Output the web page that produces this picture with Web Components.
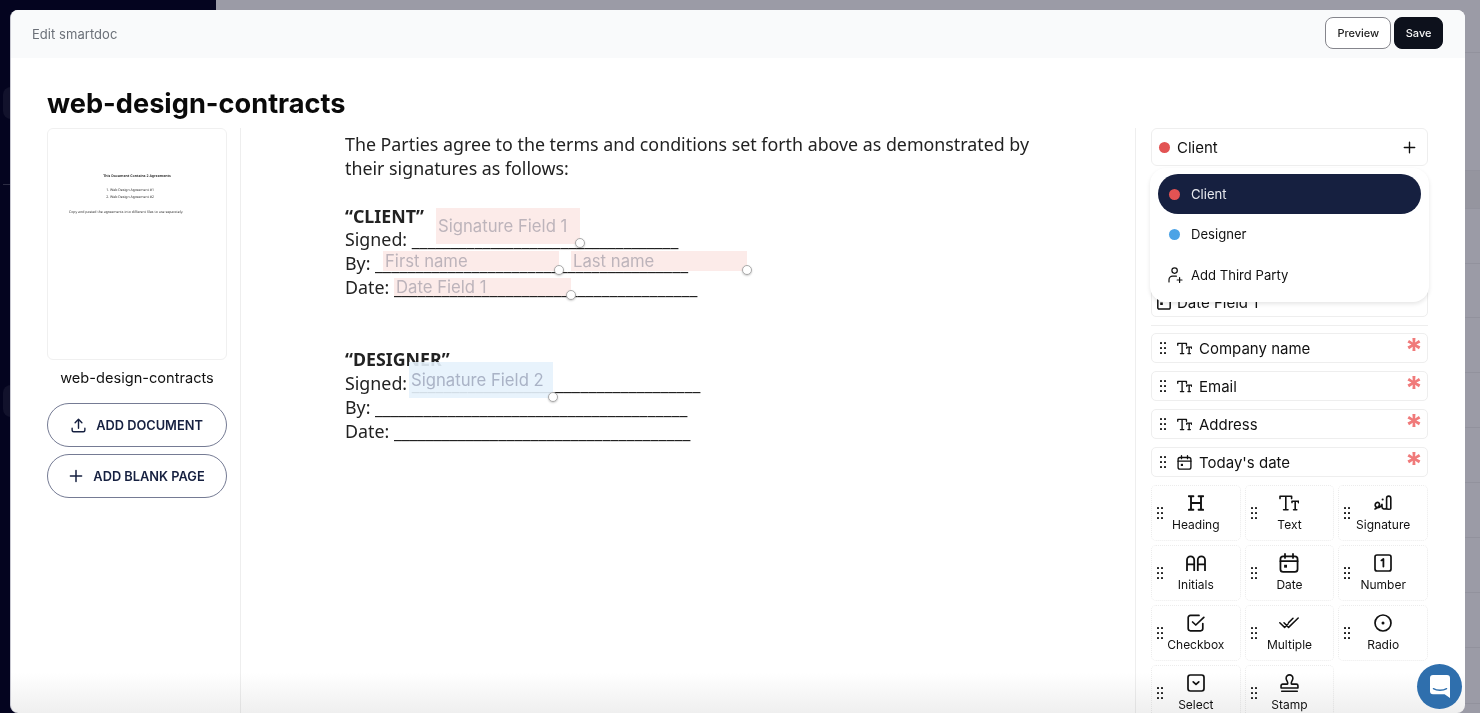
<!DOCTYPE html>
<html>
<head>
<meta charset="utf-8">
<title>Edit smartdoc</title>
<style>
    html, body { margin: 0; height: 100%; overflow: hidden; }
    body { font-family: Inter, "Liberation Sans", sans-serif; color: #111; }
</style>
</head>
<body>
<app-backdrop></app-backdrop>
<modal-shell>
    <span slot="heading">Edit smartdoc</span>
    <ui-button slot="actions">Preview</ui-button>
    <ui-button slot="actions" dark>Save</ui-button>
    <span slot="title">web-design-contracts</span>
    <doc-sidebar slot="left"></doc-sidebar>
    <doc-page slot="middle"></doc-page>
    <party-panel slot="right"></party-panel>
</modal-shell>
<chat-bubble></chat-bubble>

<script>
const ICONS = {
    heading: `<svg viewBox="0 0 16 16" stroke-width="1.9"><path d="M3 1.5V14.5M13 1.5V14.5M3 8H13M.8 1.2H5.4M10.6 1.2H15.2M.8 14.8H5.4M10.6 14.8H15.2"/></svg>`,
    text: `<svg viewBox="0 0 20 16" stroke-width="1.6"><path d="M1 3.6V1.2H12.6V3.6M6.8 1.2V14.8M4.6 14.8H9M13 7.6V6.2H19.4V7.6M16.2 6.2V14.8H14.6M16.2 14.8H17.8"/></svg>`,
    signature: `<svg viewBox="0 0 18 16" stroke-width="1.6"><path d="M1 14C4 13 6.5 10 5 8C3.5 6.5 .8 8 1.2 10.5C1.6 13 5 13.5 7 11L8 9.4V12C8 14 11 14.5 12.6 13.5"/><path d="M12.6 13.4V3.4C12.6 .4 16.8 .4 16.8 3.4V13.4C16.8 14.4 12.6 14.4 12.6 13.4Z"/><path d="M8.6 4.4H8.7" stroke-width="2"/></svg>`,
    initials: `<svg viewBox="0 0 20 16" stroke-width="1.8"><path d="M1 15.5V5A3.6 3.6 0 0 1 8.2 5V15.5M1 9.4H8.2M11.8 15.5V5A3.6 3.6 0 0 1 19 5V15.5M11.8 9.4H19"/></svg>`,
    date: `<svg viewBox="0 0 18 18" stroke-width="1.6"><rect x="1.3" y="3" width="15.4" height="14" rx="2.4"/><path d="M1.3 7.4H16.7M5.4 .8V4.4M12.6 .8V4.4"/><rect x="4.6" y="10.6" width="2.6" height="2.6" fill="#111" stroke="none"/></svg>`,
    number: `<svg viewBox="0 0 18 18" stroke-width="1.7"><rect x="1" y="1" width="16" height="16" rx="2"/><path d="M7.4 6.4L9.4 5V12.6" stroke-width="1.8"/></svg>`,
    checkbox: `<svg viewBox="0 0 18 18" stroke-width="1.7"><path d="M15.8 9.5V14.6A2.2 2.2 0 0 1 13.6 16.8H3.4A2.2 2.2 0 0 1 1.2 14.6V3.6A2.2 2.2 0 0 1 3.4 1.4H12"/><path d="M5.6 8L8.8 11L16.8 3.4"/></svg>`,
    multiple: `<svg viewBox="0 0 20 12" stroke-width="1.5"><path d="M.8 5.8L5.6 10.4L9 7M5 5.8L9.6 10.4L19.2 1M9.6 5.6L14 1.2"/></svg>`,
    radio: `<svg viewBox="0 0 18 18" stroke-width="1.7"><circle cx="9" cy="9" r="8"/><circle cx="9" cy="9" r="1.5" fill="#111" stroke="none"/></svg>`,
    select: `<svg viewBox="0 0 18 18" stroke-width="1.7"><rect x="1" y="1" width="16" height="16" rx="2.4"/><path d="M6.2 7.8L9 10.4L11.8 7.8"/></svg>`,
    stamp: `<svg viewBox="0 0 18 18" stroke-width="1.5"><path d="M1 11.2A1.6 1.6 0 0 1 2.6 9.6H6.6C7.6 9.6 7.4 8.4 7 7.4C6.4 6 5.8 5.4 5.8 4A3.2 3.2 0 0 1 12.2 4C12.2 5.4 11.6 6 11 7.4C10.6 8.4 10.4 9.6 11.4 9.6H15.4A1.6 1.6 0 0 1 17 11.2V13.2H1ZM1.6 16.4H16.4"/></svg>`,
    dateField: `<svg viewBox="0 0 14 16" stroke-width="1.5"><path d="M9 .9H2.2A1.4 1.4 0 0 0 .8 2.3V13.7A1.4 1.4 0 0 0 2.2 15.1H11.8A1.4 1.4 0 0 0 13.2 13.7V5"/><rect x="3.2" y="8.4" width="2.6" height="2.6" fill="#111" stroke="none"/></svg>`,
    addUser: `<svg viewBox="0 0 16 16" stroke-width="1.2"><circle cx="6.6" cy="3.6" r="2.7"/><path d="M1 15V12.8A3.6 3.6 0 0 1 4.6 9.2H8.4M11.6 10.6V15.4M9.2 13H14"/></svg>`,
    plus: `<svg viewBox="0 0 14 14" stroke-width="1.5"><path d="M7 1.4V12.6M1.4 7H12.6"/></svg>`,
    upload: `<svg viewBox="0 0 16 16" stroke-width="1.5"><path d="M8 11V1.6M4.4 5L8 1.4L11.6 5M1.2 11V13A1.6 1.6 0 0 0 2.8 14.6H13.2A1.6 1.6 0 0 0 14.8 13V11"/></svg>`
};

class FieldIcon extends HTMLElement {
    constructor() {
        super();
        this.attachShadow({ mode: 'open' });
    }
    connectedCallback() {
        const w = this.getAttribute('w') || 16;
        const h = this.getAttribute('h') || 16;
        const c = this.getAttribute('color') || '#111';
        const sw = this.getAttribute('sw');
        this.shadowRoot.innerHTML = `
        <style>
            :host { display: block; width: ${w}px; height: ${h}px; flex: none; }
            svg { display: block; width: 100%; height: 100%; fill: none; stroke: ${c}; stroke-linecap: round; stroke-linejoin: round; ${sw ? `stroke-width: ${sw};` : ''} }
        </style>${ICONS[this.getAttribute('name')]}`;
    }
}
customElements.define('field-icon', FieldIcon);

class DragHandle extends HTMLElement {
    constructor() {
        super();
        this.attachShadow({ mode: 'open' }).innerHTML = `
        <style>
            :host { display: grid; grid-template-columns: 2px 2px; gap: 3px 2px; flex: none; }
            i { width: 2px; height: 2px; background: #222; border-radius: 30%; }
        </style><i></i><i></i><i></i><i></i><i></i><i></i>`;
    }
}
customElements.define('drag-handle', DragHandle);

class AppBackdrop extends HTMLElement {
    constructor() {
        super();
        this.attachShadow({ mode: 'open' }).innerHTML = `
        <style>
            :host { position: absolute; inset: 0; display: flex; background: #9b9ba6; }
            .side { width: 216px; box-sizing: border-box; padding: 87px 0 0 3px; background: #04041f; display: flex; flex-direction: column; }
            .chip { width: 40px; height: 32px; border-radius: 8px; background: rgba(255,255,255,.06); }
            .rule { height: 1px; margin-top: 65px; background: rgba(255,255,255,.16); }
            .rows { flex: 1; display: flex; flex-direction: column; }
            .rows div { box-sizing: border-box; border-bottom: 1px solid #92929d; flex: none; }
            .rows .dim { background: #95959f; }
        </style>
        <div class="side">
            <div class="chip"></div>
            <div class="rule"></div>
            <div class="chip" style="margin-top:200px"></div>
        </div>
        <div class="rows">
            <div style="height:53px"></div><div style="height:118px"></div><div class="dim" style="height:38px"></div>
            <div style="height:55px"></div><div style="height:54px"></div><div style="height:55px"></div>
            <div style="height:55px"></div><div style="height:55px"></div><div style="height:55px"></div>
            <div style="height:55px"></div><div style="height:55px"></div><div style="height:56px"></div>
        </div>`;
    }
}
customElements.define('app-backdrop', AppBackdrop);

class UiButton extends HTMLElement {
    constructor() {
        super();
        this.attachShadow({ mode: 'open' }).innerHTML = `
        <style>
            :host { display: flex; align-items: center; height: 32px; box-sizing: border-box; padding: 0 11px;
                border: 1px solid #85858c; border-radius: 8px; background: #fff; color: #222;
                font-size: 11px; font-weight: 500; }
            :host([dark]) { padding: 0 10.5px; background: #0d111c; border-color: #0d111c; color: #f5f5f5; }
        </style><slot></slot>`;
    }
}
customElements.define('ui-button', UiButton);

class ModalShell extends HTMLElement {
    constructor() {
        super();
        this.attachShadow({ mode: 'open' }).innerHTML = `
        <style>
            :host { position: absolute; left: 10px; top: 10px; width: 1455px; height: 703px; box-sizing: border-box; display: flex; flex-direction: column;
                background: #fff; border-left: 1px solid #c9c9d2; border-radius: 8px; overflow: hidden; }
            header { height: 48px; flex: none; display: flex; align-items: center; justify-content: space-between;
                box-sizing: border-box; padding: 0 22px 2px 21px; background: #f9fafb; }
            .heading { margin-top: 2px; font-size: 13px; letter-spacing: .05px; color: #6b7078; }
            .actions { display: flex; gap: 3px; }
            h1 { margin: 0; padding: 29px 36px 7px; font-size: 27.2px; line-height: 34px; font-weight: 700; color: #0a0a0a; }
            main { flex: 1; min-height: 0; display: grid; grid-template-columns: 230px 895px 1fr; }
            .left { padding-left: 36px; border-right: 1px solid #eee; }
            .middle { border-right: 1px solid #eee; }
            .right { padding: 0 37px 0 15px; overflow: hidden; }
            .fade { position: absolute; left: 0; right: 0; bottom: 0; height: 40px; pointer-events: none; mix-blend-mode: multiply;
                background: linear-gradient(to bottom, #fff, #efefef); }
        </style>
        <header>
            <div class="heading"><slot name="heading"></slot></div>
            <div class="actions"><slot name="actions"></slot></div>
        </header>
        <h1><slot name="title"></slot></h1>
        <main>
            <div class="left"><slot name="left"></slot></div>
            <div class="middle"><slot name="middle"></slot></div>
            <div class="right"><slot name="right"></slot></div>
        </main>
        <div class="fade"></div>`;
    }
}
customElements.define('modal-shell', ModalShell);

class PillButton extends HTMLElement {
    constructor() {
        super();
        this.attachShadow({ mode: 'open' }).innerHTML = `
        <style>
            :host { display: flex; align-items: center; justify-content: center; gap: 10px; height: 44px; box-sizing: border-box;
                border: 1px solid #757b94; border-radius: 22px; color: #162040; font-size: 12.8px; font-weight: 600; }
        </style><slot name="icon"></slot><slot></slot>`;
    }
}
customElements.define('pill-button', PillButton);

class DocSidebar extends HTMLElement {
    constructor() {
        super();
        this.attachShadow({ mode: 'open' }).innerHTML = `
        <style>
            :host { display: flex; flex-direction: column; width: 180px; }
            .thumb { height: 232px; box-sizing: border-box; border: 1px solid #f0f0f0; border-radius: 6px; padding-top: 44px;
                font-family: "Noto Sans", sans-serif; font-size: 3.5px; line-height: 7px; color: #333; text-align: center;
                text-rendering: geometricPrecision; }
            .thumb b { display: block; margin-bottom: 7px; }
            .thumb ol { margin: 0 0 8px; padding: 0 0 0 62px; text-align: left; }
            .thumb div { padding: 0 0 0 21px; text-align: left; white-space: nowrap; }
            .name { margin: 8px 0 15px; text-align: center; font-size: 14.6px; line-height: 20px; color: #111; }
            .btns { display: flex; flex-direction: column; gap: 7px; }
        </style>
        <div class="thumb">
            <b>This Document Contains 2 Agreements</b>
            <ol><li>Web Design Agreement #1</li><li>Web Design Agreement #2</li></ol>
            <div>Copy and pasted the agreements into different files to use separately.</div>
        </div>
        <div class="name">web-design-contracts</div>
        <div class="btns">
            <pill-button><field-icon slot="icon" name="upload" color="#162040" w="15" h="15"></field-icon>ADD DOCUMENT</pill-button>
            <pill-button><field-icon slot="icon" name="plus" color="#162040" w="14" h="14"></field-icon>ADD BLANK PAGE</pill-button>
        </div>`;
    }
}
customElements.define('doc-sidebar', DocSidebar);

class SigField extends HTMLElement {
    constructor() {
        super();
        this.attachShadow({ mode: 'open' }).innerHTML = `
        <style>
            :host { position: absolute; box-sizing: border-box; padding: 2px 0 0 2px; display: flex; align-items: center; white-space: nowrap;
                background: rgba(252,232,230,.88); color: #bdb4bb; font-family: Inter, sans-serif; font-size: 16.7px; }
            :host([blue]) { background: rgba(230,242,252,.9); color: #aab3c6; }
            i { position: absolute; right: -5px; bottom: -4px; width: 10px; height: 10px; box-sizing: border-box;
                background: #fff; border: 1px solid #aaa; border-radius: 50%; box-shadow: 0 1px 2px rgba(0,0,0,.2); }
        </style><slot></slot><i></i>`;
    }
}
customElements.define('sig-field', SigField);

class DocPage extends HTMLElement {
    constructor() {
        super();
        this.attachShadow({ mode: 'open' }).innerHTML = `
        <style>
            :host { display: block; position: relative; height: 100%; box-sizing: border-box; padding: 5px 0 0 104px;
                font-family: "Noto Sans", sans-serif; font-size: 17.82px; line-height: 23.8px; color: #222; }
            p { margin: 0 0 24px; white-space: nowrap; }
            p.gap { margin-bottom: 48.6px; }
            .intro { white-space: normal; width: 700px; }
        </style>
        <p class="intro">The Parties agree to the terms and conditions set forth above as demonstrated by their signatures as follows:</p>
        <p class="gap"><b>“CLIENT”</b><br>
        Signed: <span style="letter-spacing:-.07px">__________________________________</span><br>
        By: <span style="letter-spacing:.12px">_______________________________________</span><br>
        Date: <span style="letter-spacing:.08px">______________________________________</span></p>
        <p><b>“DESIGNER”</b><br>
        Signed: <span style="letter-spacing:.11px">____________________________________</span><br>
        By: <span style="letter-spacing:.1px">_______________________________________</span><br>
        Date: <span style="letter-spacing:.11px">_____________________________________</span></p>
        <sig-field style="left:195px;top:80px;width:144px;height:36px">Signature Field 1</sig-field>
        <sig-field style="left:142px;top:123px;width:176px;height:20px">First name</sig-field>
        <sig-field style="left:330px;top:123px;width:176px;height:20px">Last name</sig-field>
        <sig-field style="left:153px;top:150px;width:177px;height:18px">Date Field 1</sig-field>
        <sig-field blue style="left:168px;top:234px;width:144px;height:36px">Signature Field 2</sig-field>`;
    }
}
customElements.define('doc-page', DocPage);

class FieldRow extends HTMLElement {
    constructor() {
        super();
        this.attachShadow({ mode: 'open' });
    }
    connectedCallback() {
        const plain = this.hasAttribute('plain');
        this.shadowRoot.innerHTML = `
        <style>
            :host { display: flex; align-items: center; height: 30px; box-sizing: border-box; border: 1px solid #eee; border-radius: 5px;
                padding-left: ${plain ? 5 : 8}px; font-size: 15px; color: #111; }
            drag-handle { margin-right: 11px; }
            field-icon { margin-right: ${plain ? 6 : 7}px; }
            .req { margin-left: auto; margin-right: 4px; color: #f07a7a; font-size: 32px; font-weight: 700; line-height: 36px; height: 30px; }
        </style>
        ${plain ? '' : '<drag-handle></drag-handle>'}
        <field-icon name="${this.getAttribute('icon')}" sw="${this.getAttribute('sw') || ''}" w="${this.getAttribute('w') || 15}" h="${this.getAttribute('h') || 15}"></field-icon>
        <slot></slot>
        ${this.hasAttribute('required') ? '<span class="req">*</span>' : ''}`;
    }
}
customElements.define('field-row', FieldRow);

class FieldTile extends HTMLElement {
    constructor() {
        super();
        this.attachShadow({ mode: 'open' });
    }
    connectedCallback() {
        this.shadowRoot.innerHTML = `
        <style>
            :host { display: flex; flex-direction: column; align-items: center; position: relative; height: 56px; box-sizing: border-box;
                border: 1px dotted #ececec; border-radius: 5px; padding-top: 7px; font-size: 12px; color: #111; }
            drag-handle { position: absolute; left: 5px; top: 21px; }
            .ico { height: 20px; display: flex; align-items: center; justify-content: center; margin-bottom: 4px; }
            .lab { line-height: 15px; }
        </style>
        <drag-handle></drag-handle>
        <div class="ico"><field-icon name="${this.getAttribute('icon')}" w="${this.getAttribute('w') || 18}" h="${this.getAttribute('h') || 18}"></field-icon></div>
        <div class="lab"><slot></slot></div>`;
    }
}
customElements.define('field-tile', FieldTile);

class PartyMenu extends HTMLElement {
    constructor() {
        super();
        this.attachShadow({ mode: 'open' }).innerHTML = `
        <style>
            :host { position: absolute; left: -1px; right: -1px; top: 40px; height: 134px; box-sizing: border-box; padding: 6px 8px;
                display: flex; flex-direction: column; background: #fff; border-radius: 16px; box-shadow: 0 2px 4px rgba(0,0,0,.1); font-size: 13.1px; color: #111; }
            .item { height: 40px; flex: none; display: flex; align-items: center; gap: 11px; padding-left: 11px; border-radius: 20px; }
            .on { background: #162040; color: #e6e8ee; }
            .dot { width: 11px; height: 11px; border-radius: 50%; }
            .add { margin-top: 1px; gap: 7px; padding-left: 10px; }
        </style>
        <div class="item on"><span class="dot" style="background:#e25353"></span>Client</div>
        <div class="item"><span class="dot" style="background:#4ba3e6"></span>Designer</div>
        <div class="item add"><field-icon name="addUser" w="16" h="16"></field-icon>Add Third Party</div>`;
    }
}
customElements.define('party-menu', PartyMenu);

class PartyPanel extends HTMLElement {
    constructor() {
        super();
        this.attachShadow({ mode: 'open' }).innerHTML = `
        <style>
            :host { display: block; position: relative; }
            .select { height: 38px; box-sizing: border-box; display: flex; align-items: center; gap: 7px; padding: 0 11px 0 7px;
                border: 1px solid #eee; border-radius: 6px; font-size: 15px; color: #111; }
            .dot { width: 11px; height: 11px; border-radius: 50%; background: #e25353; }
            .select field-icon { margin-left: auto; }
            .hidden { margin-top: 121px; }
            hr { margin: 8px 0 7px; border: 0; border-top: 1px solid #eee; }
            .rows { display: flex; flex-direction: column; gap: 8px; }
            .tiles { display: grid; grid-template-columns: repeat(3, 1fr); gap: 4px; margin-top: 8px; }
        </style>
        <div class="select"><span class="dot"></span>Client<field-icon name="plus" w="13" h="13"></field-icon></div>
        <party-menu></party-menu>
        <div class="hidden"><field-row plain icon="dateField" w="14" h="16">Date Field 1</field-row></div>
        <hr>
        <div class="rows">
            <field-row required icon="text" sw="1.8">Company name</field-row>
            <field-row required icon="text" sw="1.8">Email</field-row>
            <field-row required icon="text" sw="1.8">Address</field-row>
            <field-row required icon="date">Today's date</field-row>
        </div>
        <div class="tiles">
            <field-tile icon="heading" w="16" h="16">Heading</field-tile>
            <field-tile icon="text" w="20" h="16">Text</field-tile>
            <field-tile icon="signature" w="18" h="16">Signature</field-tile>
            <field-tile icon="initials" w="20" h="16">Initials</field-tile>
            <field-tile icon="date" w="20" h="20">Date</field-tile>
            <field-tile icon="number">Number</field-tile>
            <field-tile icon="checkbox">Checkbox</field-tile>
            <field-tile icon="multiple" w="20" h="12">Multiple</field-tile>
            <field-tile icon="radio">Radio</field-tile>
            <field-tile icon="select">Select</field-tile>
            <field-tile icon="stamp" w="19" h="19">Stamp</field-tile>
        </div>`;
    }
}
customElements.define('party-panel', PartyPanel);

class ChatBubble extends HTMLElement {
    constructor() {
        super();
        this.attachShadow({ mode: 'open' }).innerHTML = `
        <style>
            :host { position: absolute; left: 1417px; top: 664px; width: 45px; height: 45px; border-radius: 50%; background: #2f6fad;
                display: flex; align-items: center; justify-content: center; }
            svg { display: block; width: 20px; height: 23px; }
        </style>
        <svg viewBox="0 0 20 23"><path fill="#fff" d="M3 0H17A3 3 0 0 1 20 3V23L14.6 19.2H3A3 3 0 0 1 0 16.2V3A3 3 0 0 1 3 0Z"/><path fill="none" stroke="#2f6fad" stroke-width="1.3" stroke-linecap="round" d="M3.4 13.6C7 15.8 13 15.8 16.6 13.6"/></svg>`;
    }
}
customElements.define('chat-bubble', ChatBubble);
</script>
</body>
</html>
